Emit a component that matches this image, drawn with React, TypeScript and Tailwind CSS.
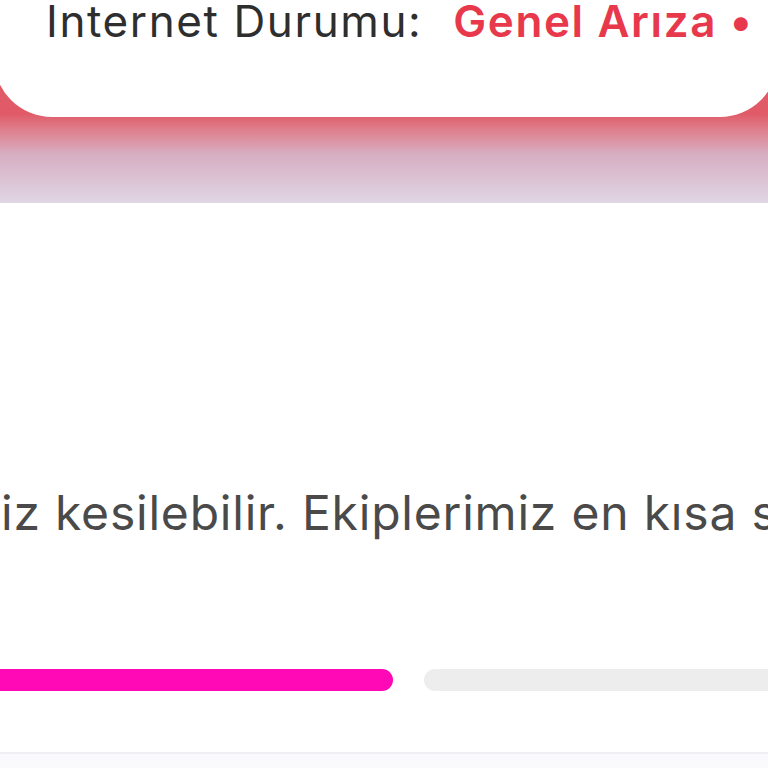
import React from "react";

const font = { fontFamily: "Inter, 'Noto Sans', sans-serif" };

export default function App() {
  return (
    <div className="w-[768px] h-[768px] overflow-hidden bg-white flex flex-col" style={font}>
      {/* header with gradient backdrop */}
      <div className="h-[203px] shrink-0 bg-gradient-to-b from-[#e05a68] from-56% via-[#d6aec2] via-76% to-[#e0d6e4]">
        <div className="-ml-[6px] -mr-[10px] h-[117px] bg-white rounded-b-[58px] pl-[52px] flex flex-col">
          <div className="flex items-baseline -mt-[7px] whitespace-nowrap text-[44px] leading-[56px] tracking-[1.6px]">
            <span className="text-[#2e2e2e]">Internet Durumu:</span>
            <span className="ml-[31px] font-semibold text-[#e8394c]">Genel Arıza •</span>
          </div>
        </div>
      </div>

      {/* body */}
      <div className="flex-1 flex flex-col">
        <div className="pt-[280px] ml-[1px] whitespace-nowrap text-[48px] leading-[60px] text-[#4a4a4a] tracking-[0.8px]">
          iz kesilebilir. Ekiplerimiz en kısa süre
        </div>
        <div className="mt-[126px] flex items-center gap-[31px] -ml-[20px]">
          <div className="w-[413px] h-[22px] rounded-full bg-[#ff08b6]" />
          <div className="flex-1 -mr-[40px] h-[22px] rounded-full bg-[#ededed]" />
        </div>
        <div className="mt-auto h-[16px] border-t-[2px] border-[#f1eff4] bg-[#faf9fc]" />
      </div>
    </div>
  );
}
